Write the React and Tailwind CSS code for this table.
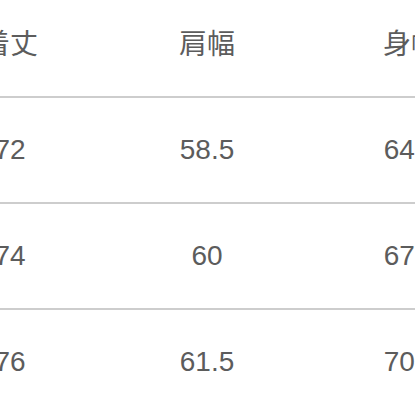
const header = ["着丈", "肩幅", "身幅"];
const rows = [
  ["72", "58.5", "64.5"],
  ["74", "60", "67.5"],
  ["76", "61.5", "70.5"],
];

const widths = ["w-[198px]", "w-[196px]", "w-[212px]"];

function Row({ cells, height, extra }) {
  return (
    <div className={`flex items-center shrink-0 ${height} ${extra}`}>
      {cells.map((c, i) => (
        <div key={i} className={`${widths[i]} shrink-0 text-center`}>
          {c}
        </div>
      ))}
    </div>
  );
}

export default function App() {
  return (
    <div
      className="w-[415px] h-[415px] overflow-hidden bg-white text-[#5c5c5c] text-[28px] leading-none"
      style={{ fontFamily: '"Liberation Sans", "Noto Sans CJK JP", sans-serif' }}
    >
      <div className="flex flex-col -ml-[89px] w-[606px]">
        <Row cells={header} height="h-[96px]" extra="pb-[6px]" />
        <div className="h-[2px] bg-[#cdcdcd] w-full" />
        {rows.map((r, i) => (
          <div key={i}>
            <Row cells={r} height="h-[104px]" extra="" />
            {i < rows.length - 1 && <div className="h-[2px] bg-[#cdcdcd] w-full" />}
          </div>
        ))}
      </div>
    </div>
  );
}
